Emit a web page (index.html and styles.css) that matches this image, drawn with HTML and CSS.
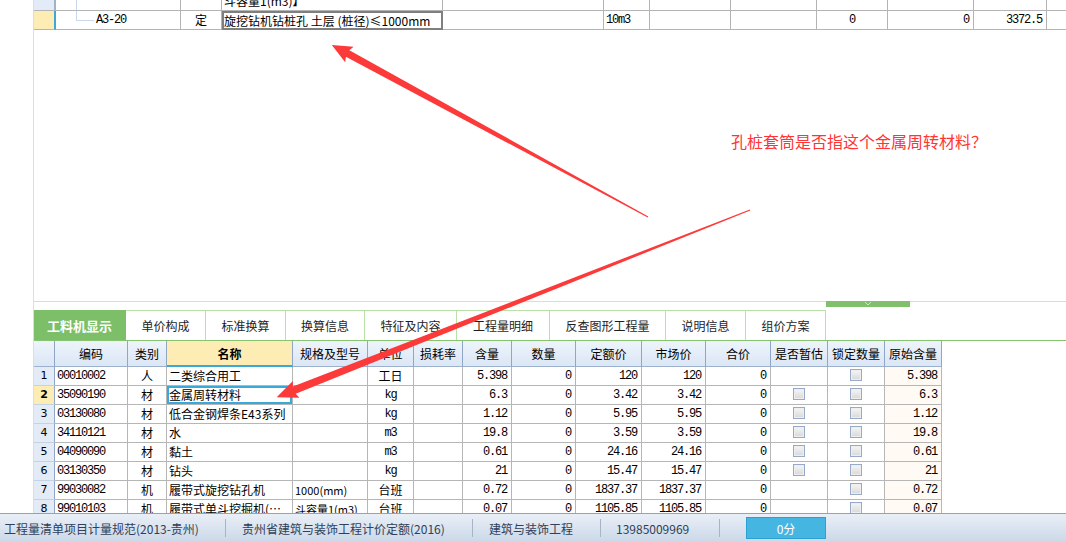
FILE: index.html
```html
<!DOCTYPE html>
<html lang="zh-CN">
<head>
<meta charset="utf-8">
<title>工料机显示</title>
<link rel="stylesheet" href="styles.css">
</head>
<body>
<div class="main">
  <section class="top">
    <div class="trow prev">
      <div class="tc rn"></div>
      <div class="tc code"><span class="tree full"></span></div>
      <div class="tc"></div>
      <div class="tc name">斗容量1(m3)】</div>
      <div class="tc"></div><div class="tc"></div><div class="tc"></div><div class="tc"></div>
      <div class="tc"></div><div class="tc"></div><div class="tc"></div><div class="tc last"></div>
    </div>
    <div class="trow cur">
      <div class="tc rn"></div>
      <div class="tc code"><span class="tree"></span><span class="num">A3-20</span></div>
      <div class="tc c">定</div>
      <div class="tc name sel">旋挖钻机钻桩孔 土层 (桩径)≤1000mm</div>
      <div class="tc"></div>
      <div class="tc num">10m3</div>
      <div class="tc"></div>
      <div class="tc"></div>
      <div class="tc c num">0</div>
      <div class="tc r num">0</div>
      <div class="tc r num">3372.5</div>
      <div class="tc last"></div>
    </div>
  </section>

  <div class="splitter"><div class="handle"><svg width="10" height="5" viewBox="0 0 10 5"><path d="M2 1 L5 4 L8 1" fill="none" stroke="#cfe8c4" stroke-width="1"/></svg></div></div>

  <section class="bottom">
    <nav class="tabs">
      <div class="tab active w92">工料机显示</div>
      <div class="tab w80">单价构成</div>
      <div class="tab w80">标准换算</div>
      <div class="tab w79">换算信息</div>
      <div class="tab w92">特征及内容</div>
      <div class="tab w93">工程量明细</div>
      <div class="tab w116">反查图形工程量</div>
      <div class="tab w80">说明信息</div>
      <div class="tab w80">组价方案</div>
    </nav>

    <div class="grid">
      <div class="grow ghead">
        <div class="h rn"></div>
        <div class="h">编码</div>
        <div class="h">类别</div>
        <div class="h hsel">名称</div>
        <div class="h">规格及型号</div>
        <div class="h">单位</div>
        <div class="h">损耗率</div>
        <div class="h">含量</div>
        <div class="h">数量</div>
        <div class="h">定额价</div>
        <div class="h">市场价</div>
        <div class="h">合价</div>
        <div class="h">是否暂估</div>
        <div class="h">锁定数量</div>
        <div class="h">原始含量</div>
      </div>

      <div class="grow">
        <div class="d rn">1</div><div class="d num">00010002</div><div class="d c">人</div><div class="d">二类综合用工</div><div class="d"></div><div class="d c">工日</div><div class="d"></div><div class="d r num">5.398</div><div class="d r num">0</div><div class="d r num">120</div><div class="d r num">120</div><div class="d r num">0</div><div class="d c"></div><div class="d c"><span class="chk"></span></div><div class="d r num orig">5.398</div>
      </div>
      <div class="grow">
        <div class="d rn rsel">2</div><div class="d num">35090190</div><div class="d c">材</div><div class="d csel">金属周转材料</div><div class="d"></div><div class="d c num">kg</div><div class="d"></div><div class="d r num">6.3</div><div class="d r num">0</div><div class="d r num">3.42</div><div class="d r num">3.42</div><div class="d r num">0</div><div class="d c"><span class="chk"></span></div><div class="d c"><span class="chk"></span></div><div class="d r num orig">6.3</div>
      </div>
      <div class="grow">
        <div class="d rn">3</div><div class="d num">03130080</div><div class="d c">材</div><div class="d">低合金钢焊条E43系列</div><div class="d"></div><div class="d c num">kg</div><div class="d"></div><div class="d r num">1.12</div><div class="d r num">0</div><div class="d r num">5.95</div><div class="d r num">5.95</div><div class="d r num">0</div><div class="d c"><span class="chk"></span></div><div class="d c"><span class="chk"></span></div><div class="d r num orig">1.12</div>
      </div>
      <div class="grow">
        <div class="d rn">4</div><div class="d num">34110121</div><div class="d c">材</div><div class="d">水</div><div class="d"></div><div class="d c num">m3</div><div class="d"></div><div class="d r num">19.8</div><div class="d r num">0</div><div class="d r num">3.59</div><div class="d r num">3.59</div><div class="d r num">0</div><div class="d c"><span class="chk"></span></div><div class="d c"><span class="chk"></span></div><div class="d r num orig">19.8</div>
      </div>
      <div class="grow">
        <div class="d rn">5</div><div class="d num">04090090</div><div class="d c">材</div><div class="d">黏土</div><div class="d"></div><div class="d c num">m3</div><div class="d"></div><div class="d r num">0.61</div><div class="d r num">0</div><div class="d r num">24.16</div><div class="d r num">24.16</div><div class="d r num">0</div><div class="d c"><span class="chk"></span></div><div class="d c"><span class="chk"></span></div><div class="d r num orig">0.61</div>
      </div>
      <div class="grow">
        <div class="d rn">6</div><div class="d num">03130350</div><div class="d c">材</div><div class="d">钻头</div><div class="d"></div><div class="d c num">kg</div><div class="d"></div><div class="d r num">21</div><div class="d r num">0</div><div class="d r num">15.47</div><div class="d r num">15.47</div><div class="d r num">0</div><div class="d c"><span class="chk"></span></div><div class="d c"><span class="chk"></span></div><div class="d r num orig">21</div>
      </div>
      <div class="grow">
        <div class="d rn">7</div><div class="d num">99030082</div><div class="d c">机</div><div class="d">履带式旋挖钻孔机</div><div class="d small">1000(mm)</div><div class="d c">台班</div><div class="d"></div><div class="d r num">0.72</div><div class="d r num">0</div><div class="d r num">1837.37</div><div class="d r num">1837.37</div><div class="d r num">0</div><div class="d c"></div><div class="d c"><span class="chk"></span></div><div class="d r num orig">0.72</div>
      </div>
      <div class="grow">
        <div class="d rn">8</div><div class="d num">99010103</div><div class="d c">机</div><div class="d">履带式单斗挖掘机(…</div><div class="d small">斗容量1(m3)</div><div class="d c">台班</div><div class="d"></div><div class="d r num">0.07</div><div class="d r num">0</div><div class="d r num">1105.85</div><div class="d r num">1105.85</div><div class="d r num">0</div><div class="d c"></div><div class="d c"><span class="chk"></span></div><div class="d r num orig">0.07</div>
      </div>
    </div>
  </section>
</div>

<footer class="status">
  <div class="st st1">工程量清单项目计量规范(2013-贵州)</div>
  <div class="sep"></div>
  <div class="st st2">贵州省建筑与装饰工程计价定额(2016)</div>
  <div class="sep"></div>
  <div class="st st3">建筑与装饰工程</div>
  <div class="sep"></div>
  <div class="st st4">13985009969</div>
  <div class="sep"></div>
  <div class="score">0分</div>
</footer>

<div class="note">孔桩套筒是否指这个金属周转材料？</div>

<svg class="arrows" width="1066" height="542" viewBox="0 0 1066 542">
  <g transform="translate(648 217) rotate(-151.44)">
    <polygon points="0,-0.6 342,-3.6 340,-8.8 360,0 340,8.8 342,3.6 0,0.6" fill="#fd3a3a"/>
  </g>
  <g transform="translate(750 210) rotate(158.43)">
    <polygon points="0,-0.6 490,-3.8 488,-9 509,0 488,9 490,3.8 0,0.6" fill="#fd3a3a"/>
  </g>
</svg>
</body>
</html>
```

FILE: styles.css
```css
html, body {
  margin: 0;
  padding: 0;
}
body {
  width: 1066px;
  height: 542px;
  overflow: hidden;
  position: relative;
  background: #fff;
  color: #000;
  font-family: "Noto Sans CJK SC", "Noto Sans", sans-serif;
  font-size: 12px;
}

.main {
  margin-left: 33px;
  border-left: 1px solid #dedede;
  height: 513px;
  display: flex;
  flex-direction: column;
}

/* ---------- top grid ---------- */
.top {
  height: 301px;
  overflow: hidden;
  flex: none;
}
.trow {
  display: grid;
  grid-template-columns: 22px 125px 41px 221px 161px 46px 81px 86px 71px 86px 73px 1fr;
  height: 19px;
}
.trow.prev { margin-top: -8px; }
.tc {
  box-sizing: border-box;
  border-right: 1px solid #b4b4b4;
  border-bottom: 1px solid #b4b4b4;
  display: flex;
  align-items: center;
  padding: 0 2px;
  white-space: nowrap;
  overflow: hidden;
  line-height: 16px;
}
.tc.last { border-right: none; }
.tc.rn { padding: 0; }
.prev .tc.rn { background: #e2ebf7; border-right: 2px solid #9fb2cc; }
.cur .tc.rn { background: #fdedb5; border-right: 2px solid #3aa8d8; }
.tc.code { padding: 0; }
.tree {
  flex: none;
  width: 17px;
  height: 9px;
  margin-left: 20px;
  margin-right: 2px;
  align-self: flex-start;
  border-left: 1px solid #c9d7ea;
  border-bottom: 1px solid #c9d7ea;
}
.tree.full { height: 100%; border-bottom: none; }
.tc.name { padding-left: 2px; }
.tc.sel { border: 2px solid #7f7f7f; padding-left: 0; }
.c { justify-content: center; }
.r { justify-content: flex-end; }

.num {
  font-family: "Liberation Mono", "DejaVu Sans Mono", monospace;
  font-size: 12px;
  letter-spacing: -1.2px;
}
.r.num { padding-right: 4px; }

/* ---------- splitter ---------- */
.splitter {
  flex: none;
  height: 9px;
  background: linear-gradient(#dcdcdc, #dcdcdc) top left / 100% 1px no-repeat;
  display: flex;
  align-items: flex-start;
}
.handle {
  margin-left: 792px;
  width: 84px;
  height: 6px;
  background: #80c06c;
  display: flex;
  justify-content: center;
  align-items: flex-start;
}
.handle svg { display: block; }

/* ---------- bottom ---------- */
.bottom {
  flex: 1;
  overflow: hidden;
}
.tabs {
  display: flex;
  height: 31px;
  box-sizing: border-box;
  border-bottom: 1px solid #86c46f;
}
.tab {
  box-sizing: border-box;
  display: flex;
  align-items: center;
  justify-content: center;
  border-top: 1px solid #b9e0a7;
  border-right: 1px solid #b9e0a7;
  color: #1e1e1e;
  font-size: 12px;
  white-space: nowrap;
}
.tab.active {
  background: #7dbf69;
  border-color: #7dbf69;
  color: #fff;
  font-weight: bold;
  font-size: 13px;
}
.w79 { width: 79px; }
.w80 { width: 80px; }
.w92 { width: 92px; }
.w93 { width: 93px; }
.w116 { width: 116px; }

.grid { width: 908px; }
.grow {
  display: grid;
  grid-template-columns: 21px 73px 39px 126px 75px 46px 49px 49px 64px 66px 64px 65px 57px 57px 57px;
  height: 19px;
}
.grow.ghead {
  height: 26px;
  background: linear-gradient(#eef4fb, #dae6f5);
}
.h {
  box-sizing: border-box;
  border-right: 1px solid #8fa6c6;
  border-bottom: 1px solid #9db1cd;
  display: flex;
  align-items: center;
  justify-content: center;
  white-space: nowrap;
  font-size: 12px;
}
.h.hsel {
  background: #fdedb5;
  font-weight: bold;
  border-bottom: 2px solid #3aa8d8;
}
.d {
  box-sizing: border-box;
  border-right: 1px solid #b6b6b6;
  border-bottom: 1px solid #b6b6b6;
  display: flex;
  align-items: center;
  padding: 0 2px;
  white-space: nowrap;
  overflow: hidden;
  line-height: 16px;
}
.d.rn {
  justify-content: center;
  background: #e3ebf7;
  border-right: 1px solid #8fa6c6;
  border-bottom: 1px solid #c5d2e4;
  font-family: "DejaVu Sans", sans-serif;
  font-size: 11px;
  padding: 0;
}
.d.rsel { background: #fdedb5; font-weight: bold; }
.d.csel { box-shadow: inset 0 0 0 2px #3aa8d8; }
.d.orig { background: #fffaf3; }
.d.small { font-size: 11px; }
.chk {
  display: inline-block;
  box-sizing: border-box;
  width: 12px;
  height: 12px;
  margin-top: -3px;
  border: 1px solid #97abc8;
  background: linear-gradient(#f6f6f6, #d8d8d8);
  box-shadow: inset 0 0 0 1px #eeeeee;
}

/* ---------- status bar ---------- */
.status {
  box-sizing: border-box;
  height: 29px;
  border-top: 1px solid #8ea3c0;
  background: linear-gradient(#e9eff7, #cbd8e8);
  display: flex;
  align-items: center;
  font-size: 12px;
  color: #2f4058;
  white-space: nowrap;
}
.st { box-sizing: border-box; }
.st1 { width: 225px; padding-left: 4px; }
.st2 { width: 246px; padding-left: 16px; }
.st3 { width: 127px; padding-left: 16px; }
.st4 { width: 118px; padding-left: 15px; }
.sep {
  width: 1px;
  height: 18px;
  background: #a6b4c7;
}
.score {
  margin-left: 26px;
  box-sizing: border-box;
  width: 80px;
  height: 22px;
  background: #45b6e2;
  border: 1px solid #2e9fd2;
  color: #fff;
  display: flex;
  align-items: center;
  justify-content: center;
}

/* ---------- annotation overlay ---------- */
.note {
  position: absolute;
  left: 731px;
  top: 130px;
  font-size: 16px;
  line-height: 22px;
  color: #ff3434;
  white-space: nowrap;
}
.arrows {
  position: absolute;
  left: 0;
  top: 0;
  pointer-events: none;
}
```
